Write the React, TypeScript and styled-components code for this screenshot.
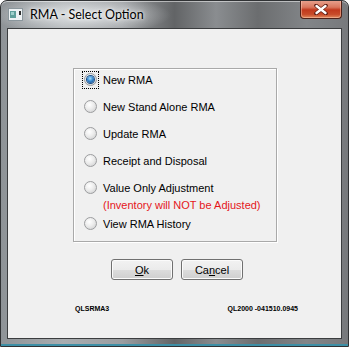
import React from 'react';
import styled, { createGlobalStyle } from 'styled-components';

const GlobalStyle = createGlobalStyle`
  html, body {
    margin: 0;
    padding: 0;
    background: #ffffff;
  }
  * {
    box-sizing: border-box;
  }
`;

// Vista glass frame around the dialog
const Window = styled.div`
  width: 349px;
  height: 347px;
  display: flex;
  flex-direction: column;
  border: 1px solid #303234;
  border-radius: 7px 7px 0 0;
  background:
    radial-gradient(ellipse 90px 20px at 80px 14px, rgba(235, 238, 240, 0.85), rgba(235, 238, 240, 0) 100%),
    linear-gradient(90deg, #8e9397 0%, #a9adb0 18%, #9a9da0 35%, #626466 50%, #8a8d90 62%, #6b6d6f 74%, #828588 88%, #77797c 100%);
  box-shadow: inset 0 -2px 0 #3d8fa6, inset 0 1px 0 rgba(255, 255, 255, 0.5);
  overflow: hidden;
`;

const TitleBar = styled.div`
  height: 27px;
  display: flex;
  align-items: flex-start;
  padding-left: 7px;
`;

const TitleIcon = styled.svg`
  margin-top: 7px;
  flex: none;
`;

const TitleText = styled.span`
  margin: 5px 0 0 7px;
  font-family: Lato, "Liberation Sans", sans-serif;
  font-size: 12.5px;
  line-height: 18px;
  color: #000;
  text-shadow: 0 0 6px rgba(255, 255, 255, 0.9), 0 0 3px rgba(255, 255, 255, 0.9);
`;

const CloseButton = styled.div`
  margin: -1px 6px 0 auto;
  width: 42px;
  height: 19px;
  display: flex;
  align-items: center;
  justify-content: center;
  border: 1px solid #4e2118;
  border-top: none;
  border-radius: 0 0 4px 4px;
  background: linear-gradient(180deg, #e9a592 0%, #d9775e 40%, #c2391d 55%, #c84c2a 80%, #e18a5e 100%);
  box-shadow: inset 0 0 0 1px rgba(255, 210, 190, 0.45);
`;

const Client = styled.div`
  flex: 1;
  margin: 0 6px 7px;
  border: 1px solid #3b3d3f;
  background: #f0f0f0;
  display: flex;
  flex-direction: column;
  font-family: "Liberation Sans", Arial, sans-serif;
  font-size: 11px;
  color: #000;
`;

const GroupBox = styled.div`
  margin: 39px 0 0 65px;
  width: 204px;
  height: 174px;
  border: 1px solid #a9a9a9;
  box-shadow: inset 1px 1px 0 #ffffff, 1px 1px 0 #ffffff;
  padding: 2px 0 0 8px;
  display: flex;
  flex-direction: column;
`;

const Option = styled.div<{ $top: number }>`
  margin-top: ${(p) => p.$top}px;
`;

const OptionRow = styled.div`
  height: 17px;
  display: flex;
  align-items: center;
  gap: 4px;
`;

const FocusBox = styled.span<{ $focused: boolean }>`
  width: 17px;
  height: 18px;
  display: flex;
  align-items: center;
  justify-content: center;
  border: 1px dotted ${(p) => (p.$focused ? '#000' : 'transparent')};
`;

const Radio = styled.span<{ $checked: boolean }>`
  width: 13px;
  height: 13px;
  border-radius: 50%;
  border: 1px solid #9c9d9f;
  background: radial-gradient(circle at 40% 35%, #ffffff 0%, #ececec 45%, #c9cacb 100%);
  display: flex;
  align-items: center;
  justify-content: center;

  &::after {
    content: '';
    display: ${(p) => (p.$checked ? 'block' : 'none')};
    width: 7px;
    height: 7px;
    border-radius: 50%;
    background: radial-gradient(circle at 45% 35%, #a6e1ff 0%, #3a8ad0 45%, #0c3f7e 100%);
    box-shadow: 0 0 0 1px #1d4f86;
  }
`;

const Note = styled.div`
  margin-left: 21px;
  line-height: 18px;
  color: #e5161b;
`;

const ButtonRow = styled.div`
  margin: 17px 0 0 103px;
  display: flex;
  gap: 8px;
`;

const Button = styled.button`
  width: 62px;
  height: 21px;
  padding: 0;
  font-family: "Liberation Sans", Arial, sans-serif;
  font-size: 11px;
  color: #000;
  border: 1px solid #707070;
  border-radius: 3px;
  background: linear-gradient(180deg, #f2f2f2 0%, #ebebeb 50%, #dddddd 51%, #cfcfcf 100%);
  box-shadow: inset 0 0 0 1px #fbfbfb;

  u {
    text-decoration: underline;
    text-underline-offset: 1px;
  }
`;

const Footer = styled.div`
  margin: 24px 43px 0 67px;
  display: flex;
  justify-content: space-between;
  font-family: "Liberation Sans", Arial, sans-serif;
  font-weight: bold;
  font-size: 7px;
  line-height: 9px;
`;

type Item = { label: string; note?: string; top: number; checked?: boolean };

const items: Item[] = [
  { label: 'New RMA', top: 0, checked: true },
  { label: 'New Stand Alone RMA', top: 10 },
  { label: 'Update RMA', top: 10 },
  { label: 'Receipt and Disposal', top: 10 },
  { label: 'Value Only Adjustment', note: '(Inventory will NOT be Adjusted)', top: 10 },
  { label: 'View RMA History', top: 1 },
];

export default function App() {
  return (
    <>
      <GlobalStyle />
      <Window>
        <TitleBar>
          <TitleIcon width="15" height="13" viewBox="0 0 15 13">
            <rect x="0.5" y="0.5" width="14" height="12" fill="#eef2f4" stroke="#8a969c" />
            <rect x="2" y="3" width="6" height="7" fill="#5f9f9b" />
            <rect x="3" y="4" width="3" height="3" fill="#9fd0cc" />
            <rect x="11" y="3" width="2" height="4" fill="#303030" />
          </TitleIcon>
          <TitleText>RMA - Select Option</TitleText>
          <CloseButton>
            <svg width="14" height="11" viewBox="0 0 14 11">
              <path d="M2 1.5 L12 9.5 M12 1.5 L2 9.5" stroke="#5a1a10" strokeWidth="3.6" strokeLinecap="round" />
              <path d="M2.5 2 L11.5 9 M11.5 2 L2.5 9" stroke="#ffffff" strokeWidth="2.4" strokeLinecap="round" />
            </svg>
          </CloseButton>
        </TitleBar>
        <Client>
          <GroupBox>
            {items.map((it) => (
              <Option key={it.label} $top={it.top}>
                <OptionRow>
                  <FocusBox $focused={!!it.checked}>
                    <Radio $checked={!!it.checked} />
                  </FocusBox>
                  <span>{it.label}</span>
                </OptionRow>
                {it.note && <Note>{it.note}</Note>}
              </Option>
            ))}
          </GroupBox>
          <ButtonRow>
            <Button>
              <u>O</u>k
            </Button>
            <Button>
              Ca<u>n</u>cel
            </Button>
          </ButtonRow>
          <Footer>
            <span>QLSRMA3</span>
            <span>QL2000 -041510.0945</span>
          </Footer>
        </Client>
      </Window>
    </>
  );
}
